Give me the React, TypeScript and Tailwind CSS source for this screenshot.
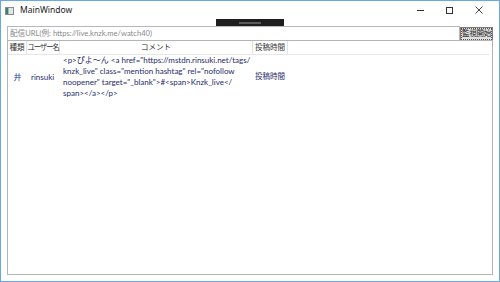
import React from "react";

const ui = { fontFamily: 'Lato, "Noto Sans CJK JP", sans-serif' };

function AppIcon() {
  return (
    <svg width="9" height="8" viewBox="0 0 9 8">
      <rect x="0.5" y="0.5" width="8" height="7" fill="#ffffff" stroke="#8a8a8a" />
      <rect x="1" y="1" width="2.5" height="6" fill="#3f7f6a" />
      <rect x="4" y="1" width="4" height="6" fill="#dfe6ee" />
    </svg>
  );
}

const lines = [
  '<p>ぴよ〜ん <a href="https://mstdn.rinsuki.net/tags/',
  'knzk_live" class="mention hashtag" rel="nofollow',
  'noopener" target="_blank">#<span>Knzk_live</',
  "span></a></p>",
];

export default function App() {
  return (
    <div
      className="w-[500px] h-[282px] border border-[#67a9e4] bg-white flex flex-col overflow-hidden"
      style={ui}
    >
      {/* title bar */}
      <div className="h-[18px] flex items-center shrink-0">
        <div className="ml-[4px] mt-[1px] flex items-center">
          <AppIcon />
        </div>
        <div
          className="ml-[6px] text-[8.5px] leading-none text-[#1a1a1a]"
          style={{ fontFamily: '"Noto Sans", sans-serif' }}
        >
          MainWindow
        </div>
        <div className="flex-1" />
        <div className="flex items-center h-full">
          <div className="w-[29px] flex justify-center">
            <div className="w-[7px] h-px bg-[#333]" />
          </div>
          <div className="w-[29px] flex justify-center">
            <div className="w-[7px] h-[7px] border border-[#333]" />
          </div>
          <div className="w-[29px] flex justify-center">
            <svg width="8" height="8" viewBox="0 0 8 8">
              <path d="M0.5 0.5 L7.5 7.5 M7.5 0.5 L0.5 7.5" stroke="#333" strokeWidth="0.9" />
            </svg>
          </div>
          <div className="w-[6px]" />
        </div>
      </div>

      {/* client area */}
      <div className="relative flex-1 flex flex-col">
        {/* debug toolbar overlay */}
        <div className="absolute left-[215px] top-0 w-[68px] h-[7px] bg-[#1e1e1e] flex items-center justify-center">
          <div className="w-[22px] h-[2px] bg-[#5a5a5a]" />
        </div>

        <div className="mt-[7px] mx-[6px] flex items-start h-[15px] shrink-0">
          <div className="flex-1 h-[15px] border border-[#b5b7bd] flex items-center pl-[2px]">
            <span className="text-[7.6px] leading-none text-[#8a8a8a] whitespace-nowrap">
              配信URL(例: https://live.knzk.me/watch40)
            </span>
          </div>
          <div className="w-[33px] h-[14px] mt-[1px] bg-[#e1e1e1] border border-[#7a7a7a] flex items-center justify-center">
            <div className="w-full h-full border border-dotted border-[#555] flex items-center justify-center">
              <span className="text-[7.5px] leading-none text-[#222] whitespace-nowrap tracking-[-0.3px]">
                監視開始
              </span>
            </div>
          </div>
        </div>

        <div className="-mt-px mx-[6px] mb-[6px] flex-1 border border-[#b4b4b4] flex flex-col">
          {/* header */}
          <div className="flex h-[14px] shrink-0 border-b border-[#e6e6e6] mr-[3px] text-[7.5px] leading-none text-[#333] whitespace-nowrap">
            <div className="w-[19px] border-r border-[#e3e3e3] flex items-center justify-center">種類</div>
            <div className="w-[33px] border-r border-[#e3e3e3] flex items-center justify-center tracking-[-1.3px]">
              ユーザー名
            </div>
            <div className="w-[193px] border-r border-[#e3e3e3] flex items-center justify-center">コメント</div>
            <div className="w-[35px] border-r border-[#e3e3e3] flex items-center justify-center">投稿時間</div>
            <div className="flex-1" />
          </div>
          {/* row */}
          <div className="flex text-[8px] text-[#262b6a] whitespace-nowrap">
            <div className="w-[19px] flex items-center justify-center text-[#2b3ea0]">井</div>
            <div className="w-[33px] flex items-center pl-[4px]">rinsuki</div>
            <div className="w-[193px] pl-[3px] leading-[11px] flex flex-col">
              {lines.map((l) => (
                <span key={l}>{l}</span>
              ))}
            </div>
            <div className="w-[35px] flex items-center pl-[2px] text-[7.5px]">投稿時間</div>
          </div>
        </div>
      </div>
    </div>
  );
}
